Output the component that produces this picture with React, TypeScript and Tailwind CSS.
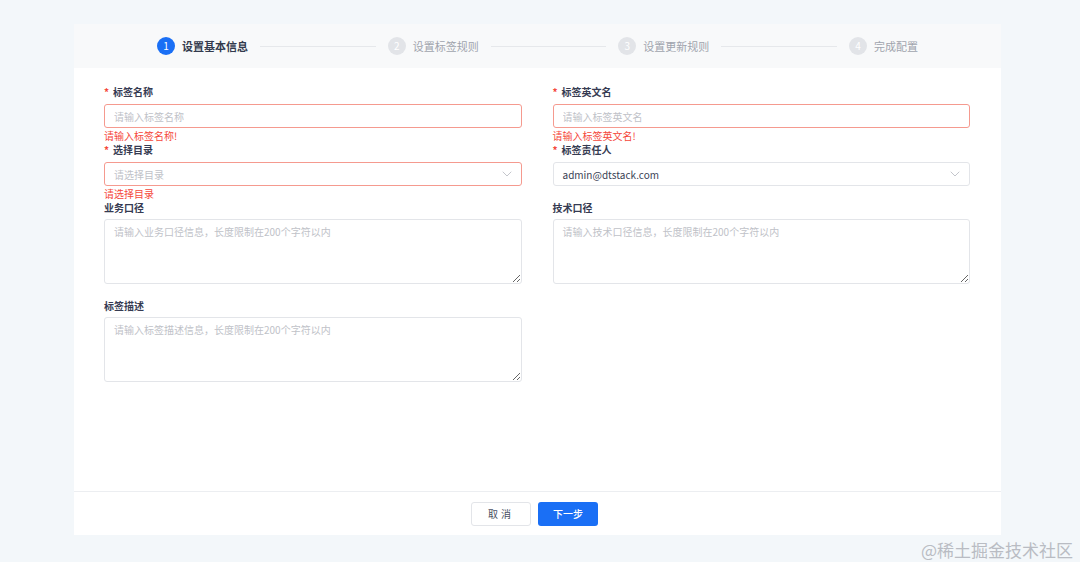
import React from "react";

const font = { fontFamily: '"Noto Sans CJK SC", "Noto Sans", sans-serif' };

function Chevron() {
  return (
    <svg width="10" height="6" viewBox="0 0 10 6" fill="none" className="shrink-0">
      <path d="M1 1l4 4 4-4" stroke="#c4c6cc" strokeWidth="1" strokeLinecap="round" strokeLinejoin="round" />
    </svg>
  );
}

function Step({ n, label, active }: { n: number; label: string; active?: boolean }) {
  return (
    <div className="flex items-center gap-[7px] shrink-0">
      <div
        className={
          active
            ? "w-[18px] h-[18px] rounded-full bg-[#1a6ff5] text-white text-[10px] flex items-center justify-center leading-none"
            : "w-[18px] h-[18px] rounded-full bg-[#e2e4e8] text-white text-[10px] flex items-center justify-center leading-none"
        }
      >
        {n}
      </div>
      <span className={active ? "text-[11px] font-semibold text-[#333a4d]" : "text-[11px] text-[#a0a4ad]"}>{label}</span>
    </div>
  );
}

function Label({ text, required, tight }: { text: string; required?: boolean; tight?: boolean }) {
  return (
    <div
      className={
        tight
          ? "h-[14px] flex items-center text-[10px] font-semibold text-[#363b52] leading-none mb-[4px]"
          : "h-[14px] flex items-center text-[10px] font-semibold text-[#363b52] leading-none mb-[5px]"
      }
    >
      {required && <span className="text-[#f5483b] mr-[4px]">*</span>}
      {text}
    </div>
  );
}

function Err({ text }: { text?: string }) {
  return <div className="h-[15px] text-[10px] leading-[15px] text-[#f5483b]">{text ?? ""}</div>;
}

const taCls =
  "block w-full h-[65px] rounded-[3px] border border-[#e3e5e9] px-[9px] py-[4px] text-[10px] text-[#333] placeholder:text-[#c0c2c8] outline-none";
const inCls =
  "block w-full h-[24px] rounded-[3px] border border-[#f59a8f] px-[9px] text-[10px] text-[#333] placeholder:text-[#c0c2c8] outline-none";

export default function App() {
  return (
    <div className="relative w-[1080px] h-[562px] bg-[#f3f7fa] overflow-hidden" style={font}>
      <div className="absolute left-[74px] top-[24px] w-[927px] h-[511px] flex flex-col bg-white">
        {/* steps */}
        <div className="h-[44px] bg-[#f8f9fa] flex items-center px-[83px]">
          <Step n={1} label="设置基本信息" active />
          <div className="flex-1 h-px bg-[#e6e8eb] mx-[12px]" />
          <Step n={2} label="设置标签规则" />
          <div className="flex-1 h-px bg-[#e6e8eb] mx-[12px]" />
          <Step n={3} label="设置更新规则" />
          <div className="flex-1 h-px bg-[#e6e8eb] mx-[12px]" />
          <Step n={4} label="完成配置" />
        </div>
        {/* body */}
        <div className="flex-1 pt-[17px] pl-[30px] pr-[31px]">
          <div className="grid grid-cols-2 gap-x-[31px]">
            <div>
              <Label text="标签名称" required />
              <input className={inCls} placeholder="请输入标签名称" />
              <Err text="请输入标签名称!" />
            </div>
            <div>
              <Label text="标签英文名" required />
              <input className={inCls} placeholder="请输入标签英文名" />
              <Err text="请输入标签英文名!" />
            </div>
            <div>
              <Label text="选择目录" required />
              <div className="w-full h-[24px] rounded-[3px] border border-[#f59a8f] px-[9px] flex items-center justify-between">
                <span className="text-[10px] text-[#c0c2c8]">请选择目录</span>
                <Chevron />
              </div>
              <Err text="请选择目录" />
            </div>
            <div>
              <Label text="标签责任人" required />
              <div className="w-full h-[24px] rounded-[3px] border border-[#e3e5e9] px-[9px] flex items-center justify-between">
                <span className="text-[10px] text-[#3a3f55]">admin@dtstack.com</span>
                <Chevron />
              </div>
              <Err />
            </div>
            <div>
              <Label text="业务口径" tight />
              <textarea className={taCls} placeholder="请输入业务口径信息，长度限制在200个字符以内" />
              <Err />
            </div>
            <div>
              <Label text="技术口径" tight />
              <textarea className={taCls} placeholder="请输入技术口径信息，长度限制在200个字符以内" />
              <Err />
            </div>
            <div>
              <Label text="标签描述" tight />
              <textarea className={taCls} placeholder="请输入标签描述信息，长度限制在200个字符以内" />
            </div>
          </div>
        </div>
        {/* footer */}
        <div className="h-[44px] border-t border-[#eceef1] flex items-center justify-center gap-[7px] pr-[6px]">
          <button className="w-[60px] h-[24px] rounded-[3px] border border-[#e3e5e9] bg-white text-[10px] text-[#4a4f62] tracking-[3px]">
            取消
          </button>
          <button className="w-[60px] h-[24px] rounded-[3px] bg-[#1a6ff5] text-[10px] text-white font-medium">
            下一步
          </button>
        </div>
      </div>
      <div className="absolute right-[7px] bottom-[4px] text-[17px] text-[#b9bcc3] leading-none">@稀土掘金技术社区</div>
    </div>
  );
}
